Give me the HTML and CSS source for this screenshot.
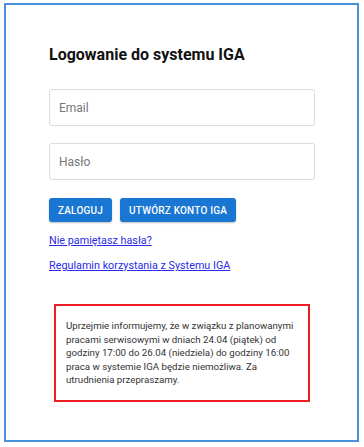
FILE: index.html
```html
<!DOCTYPE html>
<html lang="pl">

<head>
    <meta charset="UTF-8">
    <meta name="viewport" content="width=device-width, initial-scale=1.0">
    <title>Logowanie IGA</title>
    <link rel="stylesheet" href="styles.css">
</head>

<body>
    <div class="card">
        <h1>Logowanie do systemu IGA</h1>

        <form class="login-form">
            <input type="text" placeholder="Email">
            <input type="password" placeholder="Hasło">
            <div class="buttons">
                <button type="button" class="btn">Zaloguj</button>
                <button type="button" class="btn">Utwórz konto IGA</button>
            </div>
        </form>

        <a href="#" class="link">Nie pamiętasz hasła?</a>
        <a href="#" class="link">Regulamin korzystania z Systemu IGA</a>

        <div class="notice">
            Uprzejmie informujemy, że w związku z planowanymi pracami serwisowymi w dniach 24.04 (piątek) od godziny 17:00 do 26.04 (niedziela) do godziny 16:00 praca w systemie IGA będzie niemożliwa. Za utrudnienia przepraszamy.
        </div>
    </div>
</body>

</html>
```

FILE: styles.css
```css
/* Reset */
* {
    margin: 0;
    padding: 0;
    box-sizing: border-box;
}

body {
    font-family: Roboto, 'Liberation Sans', sans-serif;
    background-color: #fff;
    color: #222;
}

/* Ramka */
.card {
    margin: 3px 5px 5px 4px;
    height: 439px;
    border: 2px solid #4a90e0;
    padding: 40px 42px 0 43px;
}

.card h1 {
    font-size: 16px;
    line-height: 20px;
    font-weight: 700;
    color: #111;
    margin-bottom: 24px;
}

/* Formularz */
.login-form input {
    display: block;
    width: 266px;
    height: 37px;
    border: 1px solid #dcdcdc;
    border-radius: 3px;
    padding: 0 9px;
    font-family: inherit;
    font-size: 12px;
    margin-bottom: 17px;
}

.login-form input::placeholder {
    color: #777;
}

.login-form input + input {
    margin-bottom: 0;
}

.buttons {
    display: flex;
    gap: 8px;
    margin-top: 18px;
}

.btn {
    background-color: #1976d2;
    color: #fff;
    border: none;
    border-radius: 3px;
    height: 24px;
    padding: 0 9px;
    font-family: inherit;
    font-size: 10px;
    font-weight: 500;
    letter-spacing: 0.2px;
    text-transform: uppercase;
    box-shadow: 0 1px 2px rgba(0, 0, 0, 0.25);
    cursor: pointer;
}

/* Linki */
.link {
    display: block;
    width: max-content;
    font-size: 10.8px;
    line-height: 14px;
    color: #2a2ae8;
    margin-top: 12px;
}

.link + .link {
    margin-top: 11px;
}

/* Komunikat */
.notice {
    margin: 31px 0 0 5px;
    width: 256px;
    border: 2px solid #ee1c24;
    padding: 13px 6px 13px 10px;
    font-size: 9.7px;
    line-height: 13.5px;
    color: #333;
}
```
